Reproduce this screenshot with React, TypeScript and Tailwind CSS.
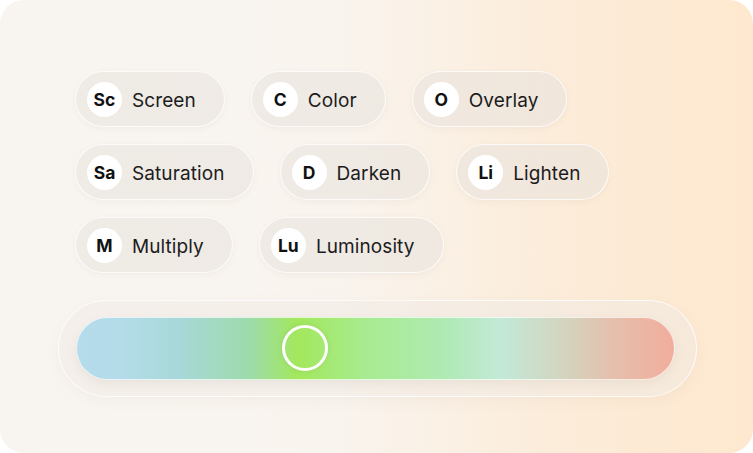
const modes = [
  { short: 'Sc', label: 'Screen' },
  { short: 'C', label: 'Color' },
  { short: 'O', label: 'Overlay' },
  { short: 'Sa', label: 'Saturation' },
  { short: 'D', label: 'Darken' },
  { short: 'Li', label: 'Lighten' },
  { short: 'M', label: 'Multiply' },
  { short: 'Lu', label: 'Luminosity' },
]

function Chip({ short, label }: { short: string; label: string }) {
  return (
    <div className="flex h-[56px] items-center gap-[10px] rounded-full border border-white/80 bg-[rgba(232,226,220,0.55)] pl-[11px] pr-[28px] shadow-[0_2px_6px_rgba(120,100,80,0.06)]">
      <div className="flex h-[35px] w-[35px] items-center justify-center rounded-full bg-white pt-[2px] text-[17.5px] font-bold leading-none text-[#111]">
        {short}
      </div>
      <span className="pt-[3px] text-[19px] leading-none tracking-[0.005em] text-[#1c1c1c]">{label}</span>
    </div>
  )
}

export default function App() {
  return (
    <div className="h-[453px] w-[753px] bg-white" style={{ fontFamily: 'Inter, "Noto Sans", sans-serif' }}>
      <div className="h-full w-full rounded-3xl bg-[linear-gradient(90deg,#f8f5f1_0%,#f9f4ee_45%,#fcecd9_75%,#fee8cf_100%)] pl-[58px] pr-[56px] pt-[71px]">
        <div className="flex w-[620px] flex-wrap gap-x-[26px] gap-y-[17px] pl-[17px]">
          {modes.map((m) => (
            <Chip key={m.label} short={m.short} label={m.label} />
          ))}
        </div>

        <div className="mt-[27px] rounded-full border border-white/80 bg-[rgba(240,234,228,0.5)] pb-[16px] pl-[17px] pr-[21px] pt-[16px] shadow-[0_4px_14px_rgba(120,100,80,0.05)]">
          <div className="relative h-[63px] rounded-full border border-white/70 bg-[linear-gradient(90deg,#b4dcec_0%,#b3dbe8_8%,#a8d8d9_17%,#9ddbaa_29%,#a3e85c_37%,#a7eb8f_48%,#b0eab5_62%,#c3e9d8_71%,#d6d1bb_83%,#e5bfac_90%,#f2ad9c_100%)] shadow-[0_4px_10px_rgba(120,100,80,0.08)]">
            <div className="absolute left-[205px] top-[7px] h-[46px] w-[46px] rounded-full border-[3px] border-white shadow-[0_0_6px_rgba(0,0,0,0.08)]" />
          </div>
        </div>
      </div>
    </div>
  )
}
